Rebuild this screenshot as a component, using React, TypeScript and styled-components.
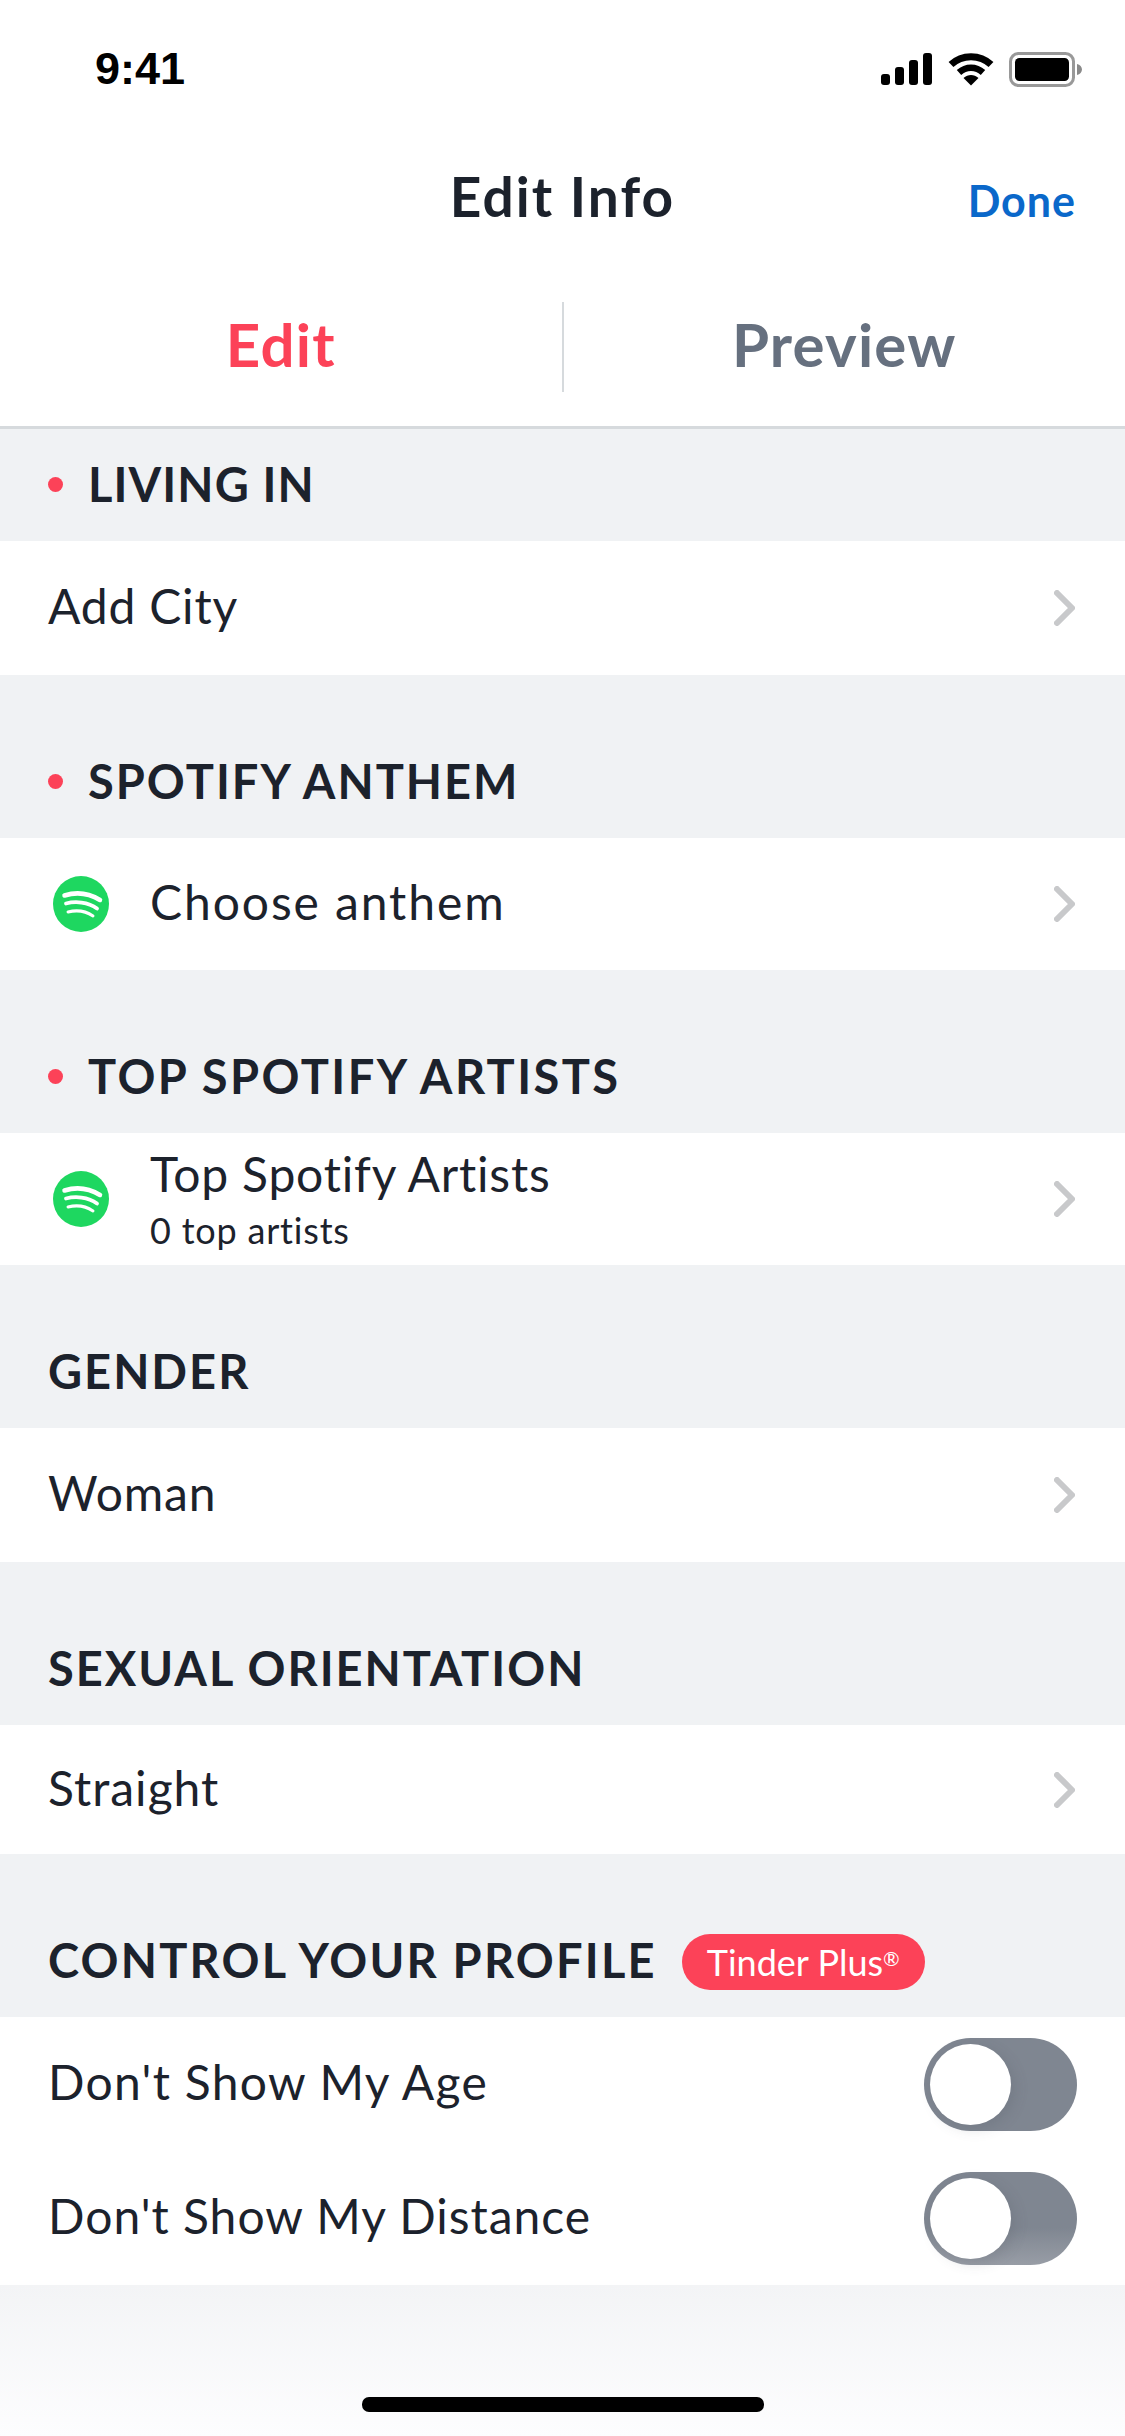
import React from 'react';
import styled, { createGlobalStyle } from 'styled-components';

const GlobalStyle = createGlobalStyle`
  html, body {
    margin: 0;
    padding: 0;
    background: #fff;
  }
`;

const Screen = styled.div`
  width: 1125px;
  height: 2436px;
  display: flex;
  flex-direction: column;
  overflow: hidden;
  position: relative;
  font-family: Lato, "Open Sans", sans-serif;
  color: #1c222c;
  background: linear-gradient(#f3f4f6, #fdfdfe) bottom / 100% 151px no-repeat #fff;
`;

const StatusBar = styled.div`
  height: 137px;
  display: flex;
  justify-content: space-between;
  align-items: flex-start;
  padding: 52px 43px 0 95px;
  box-sizing: border-box;
  background: #fff;
`;

const Time = styled.div`
  font-family: "Liberation Sans", Arial, sans-serif;
  font-size: 45px;
  line-height: 34px;
  font-weight: 700;
  color: #000;
`;

const StatusIcons = styled.div`
  display: flex;
  align-items: flex-start;
  gap: 15px;
`;

const NavBar = styled.div`
  height: 120px;
  display: flex;
  align-items: center;
  justify-content: center;
  position: relative;
  background: #fff;
`;

const Title = styled.div`
  font-size: 55px;
  font-weight: 700;
  line-height: 60px;
  letter-spacing: 2.1px;
  padding-bottom: 3px;
`;

const DoneButton = styled.div`
  position: absolute;
  right: 49px;
  top: 39px;
  font-size: 43px;
  line-height: 50px;
  font-weight: 700;
  letter-spacing: 1px;
  color: #0a68ca;
`;

const Tabs = styled.div`
  height: 172px;
  display: flex;
  background: #fff;
  border-bottom: 3px solid #d6dadd;
  padding: 45px 0 34px;
  box-sizing: border-box;
`;

const Tab = styled.div<{ $active?: boolean }>`
  flex: 1;
  display: flex;
  align-items: center;
  justify-content: center;
  padding-bottom: 7px;
  font-size: 60px;
  font-weight: 700;
  letter-spacing: 1.2px;
  color: ${(p) => (p.$active ? '#fc4258' : '#66707f')};

  &:first-child {
    border-right: 2px solid #d6dadd;
  }
`;

const SectionHeader = styled.div<{ $first?: boolean }>`
  height: ${(p) => (p.$first ? 112 : 163)}px;
  box-sizing: border-box;
  display: flex;
  align-items: flex-end;
  padding: 0 0 34px 48px;
  background: #f0f2f4;
`;

const Dot = styled.span`
  width: 15px;
  height: 15px;
  border-radius: 50%;
  background: #fc4258;
  margin: 0 25px 15px 0;
`;

const HeaderText = styled.div<{ $tracking?: number }>`
  font-size: 47px;
  line-height: 46px;
  font-weight: 700;
  letter-spacing: ${(p) => p.$tracking ?? 2}px;
`;

const Badge = styled.div`
  height: 56px;
  border-radius: 28px;
  margin: 0 0 -7px 25px;
  padding: 0 25px;
  display: flex;
  align-items: center;
  background: #fc4258;
  color: #fff;
  font-size: 36px;

  sup {
    font-size: 20px;
    line-height: 20px;
    margin-bottom: 8px;
  }
`;

const Row = styled.div<{ $height: number }>`
  height: ${(p) => p.$height}px;
  display: flex;
  align-items: center;
  padding: 0 48px;
  background: #fff;
  font-size: 48px;
`;

const SpotifyIcon = styled.svg`
  width: 56px;
  height: 56px;
  margin: 0 41px 0 5px;
  flex-shrink: 0;
`;

const RowBody = styled.div`
  flex: 1;
  display: flex;
  flex-direction: column;
  padding-bottom: 4px;
`;

const RowLabel = styled.div<{ $tracking?: number }>`
  line-height: 56px;
  letter-spacing: ${(p) => p.$tracking ?? 0.8}px;
`;

const RowSub = styled.div`
  font-size: 36px;
  line-height: 46px;
  letter-spacing: 0.8px;
  margin: 5px 0 -5px;
`;

const Chevron = styled.svg`
  width: 21px;
  height: 36px;
  margin-right: 2px;
`;

const Toggle = styled.div<{ $faded?: boolean }>`
  width: 153px;
  height: 93px;
  border-radius: 47px;
  padding: 6px;
  box-sizing: border-box;
  background: ${(p) => (p.$faded ? 'linear-gradient(#7f8691 60%, #989da6)' : '#7f8691')};
`;

const Knob = styled.div`
  width: 81px;
  height: 81px;
  border-radius: 50%;
  background: #fff;
  box-shadow: 4px 4px 14px rgba(70, 76, 86, 0.18);
`;

const HomeBar = styled.div`
  position: absolute;
  left: 362px;
  bottom: 24px;
  width: 402px;
  height: 15px;
  border-radius: 7px;
  background: #000;
`;

function Spotify() {
  return (
    <SpotifyIcon viewBox="0 0 56 56">
      <circle cx="28" cy="28" r="28" fill="#1ed760" />
      <g fill="none" stroke="#fff" strokeLinecap="round">
        <path d="M11.5 19.5c11-3.500 24-2.500 35.500 4.500" strokeWidth="4.500" />
        <path d="M13 27.500c9-2.500 22-1.800 31 5" strokeWidth="3.800" />
        <path d="M15 36c8-2 17-1.500 25 4" strokeWidth="3" />
      </g>
    </SpotifyIcon>
  );
}

function RowChevron() {
  return (
    <Chevron viewBox="0 0 21 36">
      <path d="M3 3l15 15L3 33" fill="none" stroke="#c8c9cb" strokeWidth="6" strokeLinecap="round" strokeLinejoin="round" />
    </Chevron>
  );
}

export default function App() {
  return (
    <Screen>
      <GlobalStyle />
      <StatusBar>
        <Time>9:41</Time>
        <StatusIcons>
          <svg width="52" height="34" viewBox="0 0 52 34">
            <rect x="0" y="22" width="9" height="11" rx="3" />
            <rect x="14" y="15" width="9" height="18" rx="3" />
            <rect x="28" y="8" width="9" height="25" rx="3" />
            <rect x="42" y="1" width="9" height="32" rx="3" />
          </svg>
          <svg width="46" height="34" viewBox="0 0 46 34">
            <path d="M3 12.500C14 2 32 2 43 12.500" fill="none" stroke="#000" strokeWidth="7" />
            <path d="M11 20.500c7-6.500 17-6.500 24 0" fill="none" stroke="#000" strokeWidth="6.500" />
            <path d="M15.500 26c4.500-4 10.500-4 15 0L23 33.500z" />
          </svg>
          <svg width="73" height="35" viewBox="0 0 73 35">
            <rect x="1.500" y="1.500" width="63" height="32" rx="8" fill="none" stroke="#999" strokeWidth="3" />
            <rect x="6" y="6" width="54" height="23" rx="4.500" />
            <path d="M68 12c3 .8 5 3 5 5.500s-2 4.700-5 5.500z" fill="#8a8a8a" />
          </svg>
        </StatusIcons>
      </StatusBar>
      <NavBar>
        <Title>Edit Info</Title>
        <DoneButton>Done</DoneButton>
      </NavBar>
      <Tabs>
        <Tab $active>Edit</Tab>
        <Tab>Preview</Tab>
      </Tabs>

      <SectionHeader $first>
        <Dot />
        <HeaderText $tracking={1.1}>LIVING IN</HeaderText>
      </SectionHeader>
      <Row $height={134}>
        <RowBody><RowLabel>Add City</RowLabel></RowBody>
        <RowChevron />
      </Row>

      <SectionHeader>
        <Dot />
        <HeaderText>SPOTIFY ANTHEM</HeaderText>
      </SectionHeader>
      <Row $height={132}>
        <Spotify />
        <RowBody><RowLabel $tracking={1.9}>Choose anthem</RowLabel></RowBody>
        <RowChevron />
      </Row>

      <SectionHeader>
        <Dot />
        <HeaderText $tracking={2.4}>TOP SPOTIFY ARTISTS</HeaderText>
      </SectionHeader>
      <Row $height={132}>
        <Spotify />
        <RowBody>
          <RowLabel>Top Spotify Artists</RowLabel>
          <RowSub>0 top artists</RowSub>
        </RowBody>
        <RowChevron />
      </Row>

      <SectionHeader>
        <HeaderText>GENDER</HeaderText>
      </SectionHeader>
      <Row $height={134}>
        <RowBody><RowLabel>Woman</RowLabel></RowBody>
        <RowChevron />
      </Row>

      <SectionHeader>
        <HeaderText>SEXUAL ORIENTATION</HeaderText>
      </SectionHeader>
      <Row $height={129}>
        <RowBody><RowLabel $tracking={1}>Straight</RowLabel></RowBody>
        <RowChevron />
      </Row>

      <SectionHeader>
        <HeaderText $tracking={2.2}>CONTROL YOUR PROFILE</HeaderText>
        <Badge>Tinder Plus<sup>®</sup></Badge>
      </SectionHeader>
      <Row $height={134}>
        <RowBody><RowLabel $tracking={1.3}>Don't Show My Age</RowLabel></RowBody>
        <Toggle><Knob /></Toggle>
      </Row>
      <Row $height={134}>
        <RowBody><RowLabel $tracking={1}>Don't Show My Distance</RowLabel></RowBody>
        <Toggle $faded><Knob /></Toggle>
      </Row>

      <HomeBar />
    </Screen>
  );
}
